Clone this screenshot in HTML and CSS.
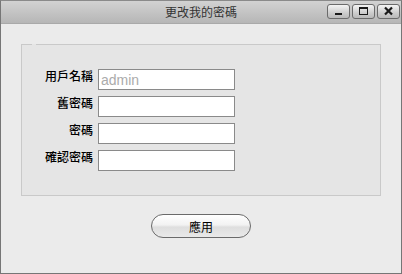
FILE: index.html
```html
<!DOCTYPE html>
<html lang="zh-Hant">
<head>
    <meta charset="UTF-8">
    <title>更改我的密碼</title>
    <link rel="stylesheet" href="styles.css">
</head>
<body>

    <div class="window">
        <div class="titlebar">
            <span></span>
            <span class="title">更改我的密碼</span>
            <div class="win-btns">
                <span class="win-btn">
                    <svg width="21" height="13" viewBox="0 0 21 13"><rect x="7" y="8" width="7" height="2" fill="#1a1a1a"/></svg>
                </span>
                <span class="win-btn">
                    <svg width="21" height="13" viewBox="0 0 21 13"><rect x="6.5" y="2.5" width="8" height="7" fill="none" stroke="#1a1a1a" stroke-width="1"/><rect x="6" y="2" width="9" height="2" fill="#1a1a1a"/></svg>
                </span>
                <span class="win-btn">
                    <svg width="21" height="13" viewBox="0 0 21 13"><path d="M7 2.5 L14 9.5 M14 2.5 L7 9.5" stroke="#1a1a1a" stroke-width="2.2"/></svg>
                </span>
            </div>
        </div>

        <div class="content">
            <fieldset class="group">
                <legend></legend>
                <div class="form-grid">
                    <label>用戶名稱</label>
                    <input type="text" placeholder="admin">
                    <label>舊密碼</label>
                    <input type="password">
                    <label>密碼</label>
                    <input type="password">
                    <label>確認密碼</label>
                    <input type="password">
                </div>
            </fieldset>

            <div class="actions">
                <button class="apply-btn">應用</button>
            </div>
        </div>
    </div>

</body>
</html>
```

FILE: styles.css
```css
body {
    margin: 0;
    font-family: "Liberation Sans", "Noto Sans CJK TC", sans-serif;
    background-color: #ebebeb;
}
.window {
    width: 402px;
    height: 274px;
    box-sizing: border-box;
    border: 1px solid #767676;
    border-top-color: #8a8a8a;
    background-color: #ebebeb;
    display: flex;
    flex-direction: column;
}
.titlebar {
    height: 22px;
    display: grid;
    grid-template-columns: 1fr auto 1fr;
    align-items: start;
    background: linear-gradient(#d2d2d2, #b6b6b6);
    border-bottom: 1px solid #a9a9a9;
}
.title {
    font-family: "Noto Sans CJK TC", sans-serif;
    font-size: 12px;
    line-height: 14px;
    margin-top: 4px;
    color: #333;
}
.win-btns {
    justify-self: end;
    display: flex;
    gap: 2px;
    margin-top: 3px;
    margin-right: 1px;
}
.win-btn {
    width: 21px;
    height: 13px;
    border: 1px solid #6b6b6b;
    border-radius: 3px;
    background: linear-gradient(#f4f4f4, #cdcdcd 60%, #b9b9b9);
    display: flex;
}
.content {
    padding: 20px 20px 0 20px;
}
.group {
    margin: 0;
    padding: 0;
    height: 152px;
    box-sizing: border-box;
    border: 1px solid #c9c9c9;
    background-color: #e5e5e5;
}
.group legend {
    margin-left: 10px;
    padding: 0 2px;
}
.form-grid {
    display: grid;
    grid-template-columns: 71px 137px;
    grid-auto-rows: 21px;
    column-gap: 5px;
    row-gap: 6px;
    margin-top: 24px;
}
.form-grid label {
    font-family: "Noto Sans CJK TC", sans-serif;
    font-size: 12px;
    font-weight: 500;
    line-height: 14px;
    text-align: right;
    color: #000;
}
.form-grid input {
    margin: 0;
    padding: 0 2px;
    height: 21px;
    box-sizing: border-box;
    border: 1px solid #8a8a8a;
    background: white;
    font-family: "Liberation Sans", sans-serif;
    font-size: 14px;
}
.form-grid input::placeholder {
    color: #ababab;
}
.actions {
    display: flex;
    justify-content: center;
    margin-top: 18px;
}
.apply-btn {
    width: 100px;
    height: 24px;
    border: 1px solid #6a6a6a;
    border-radius: 12px;
    background: linear-gradient(#ffffff, #f2f2f2 45%, #dedede 55%, #e9e9e9);
    font-family: "Noto Sans CJK TC", sans-serif;
    font-size: 12px;
    color: #000;
    padding: 0;
    cursor: pointer;
}
```
